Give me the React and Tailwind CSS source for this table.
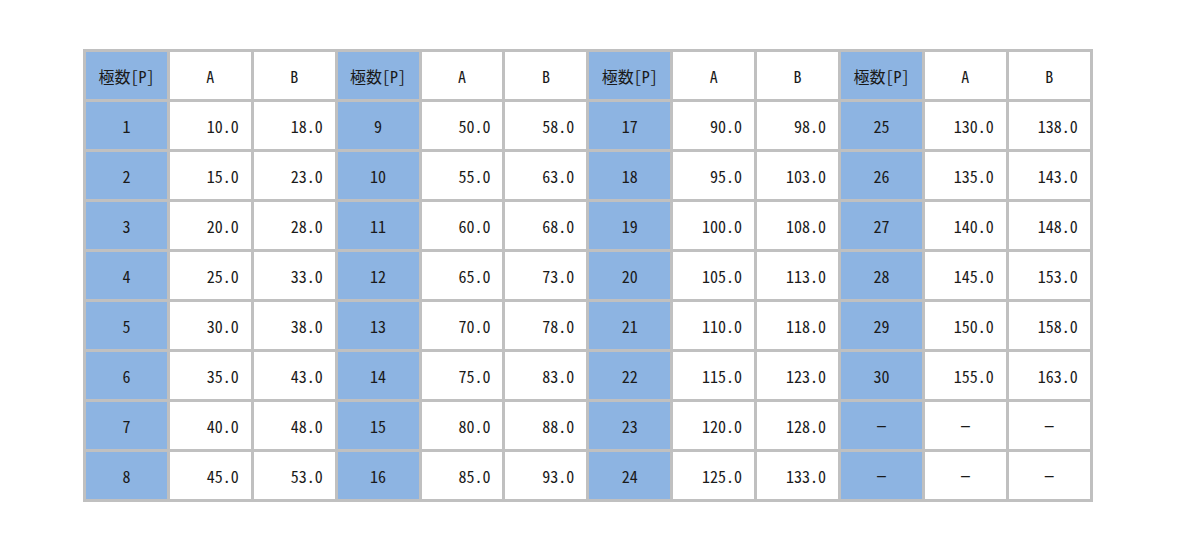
import React from "react";

const font = { fontFamily: '"Noto Sans CJK JP", "Noto Sans", sans-serif' };

// 4 groups of 8 rows: [poles, A, B]
const groups = [0, 1, 2, 3].map((g) =>
  Array.from({ length: 8 }, (_, i) => {
    const p = g * 8 + i + 1;
    if (p > 30) return null;
    const a = 5 * p + 5;
    return [p, a.toFixed(1), (a + 8).toFixed(1)];
  })
);

function Head({ children, blue }) {
  return (
    <div
      className={`flex items-center justify-center text-[16px] text-[#1a1a1a] ${
        blue ? "bg-[#8db4e2]" : "bg-white"
      }`}
    >
      {children}
    </div>
  );
}

function Num({ children }) {
  return (
    <div className="flex items-center justify-end bg-white pr-[12px] text-[16px] text-[#1a1a1a]">
      {children}
    </div>
  );
}

function Dash({ blue }) {
  return (
    <div
      className={`flex items-center justify-center text-[16px] text-[#1a1a1a] ${
        blue ? "bg-[#8db4e2]" : "bg-white"
      }`}
      style={{ fontFamily: '"Liberation Sans", sans-serif' }}
    >
      –
    </div>
  );
}

export default function App() {
  const cells = [];
  groups.forEach((_, g) => {
    cells.push(<Head key={`h${g}p`} blue>極数[P]</Head>);
    cells.push(<Head key={`h${g}a`}>A</Head>);
    cells.push(<Head key={`h${g}b`}>B</Head>);
  });
  for (let r = 0; r < 8; r++) {
    groups.forEach((grp, g) => {
      const row = grp[r];
      if (!row) {
        cells.push(<Dash key={`${r}-${g}p`} blue />);
        cells.push(<Dash key={`${r}-${g}a`} />);
        cells.push(<Dash key={`${r}-${g}b`} />);
      } else {
        cells.push(<Head key={`${r}-${g}p`} blue>{row[0]}</Head>);
        cells.push(<Num key={`${r}-${g}a`}>{row[1]}</Num>);
        cells.push(<Num key={`${r}-${g}b`}>{row[2]}</Num>);
      }
    });
  }

  return (
    <div
      className="min-h-screen bg-white pl-[83px] pt-[49px] [font-feature-settings:'hwid']"
      style={font}
    >
      <div className="grid w-fit grid-cols-[repeat(12,80.9px)] auto-rows-[47px] gap-[3px] bg-[#c0c0c0] p-[3px]">
        {cells}
      </div>
    </div>
  );
}
